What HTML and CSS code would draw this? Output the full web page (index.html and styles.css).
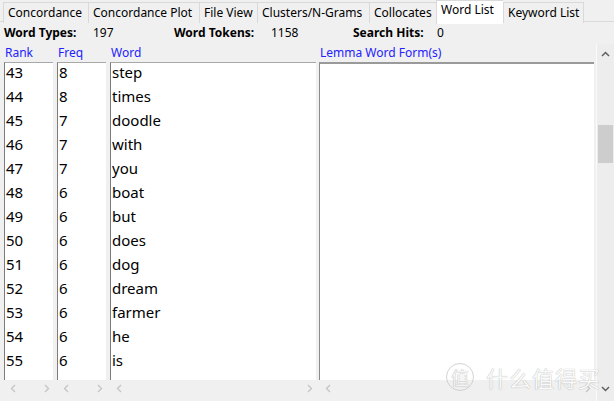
FILE: index.html
```html
<!DOCTYPE html>
<html>
<head>
<meta charset="utf-8">
<link rel="stylesheet" href="styles.css">
</head>
<body>
<div class="app">
  <nav class="tabs">
    <div class="tab t1">Concordance</div>
    <div class="tab t2">Concordance Plot</div>
    <div class="tab t3">File View</div>
    <div class="tab t4">Clusters/N-Grams</div>
    <div class="tab t5">Collocates</div>
    <div class="tab t6 active">Word List</div>
    <div class="tab t7">Keyword List</div>
  </nav>
  <div class="stats">
    <span class="lbl">Word Types:</span><span class="val">197</span>
    <span class="lbl">Word Tokens:</span><span class="val">1158</span>
    <span class="lbl">Search Hits:</span><span class="val">0</span>
  </div>
  <div class="main">
    <div class="lists">
      <div class="col c-rank">
        <div class="hdr">Rank</div>
        <div class="box">
          <div class="row">43</div><div class="row">44</div><div class="row">45</div><div class="row">46</div><div class="row">47</div><div class="row">48</div><div class="row">49</div><div class="row">50</div><div class="row">51</div><div class="row">52</div><div class="row">53</div><div class="row">54</div><div class="row">55</div>
        </div>
        <div class="hscroll">
          <svg class="arr" width="6" height="9" viewBox="0 0 6 9"><path d="M5 1 L1.5 4.5 L5 8" fill="none" stroke="#c4c4c4" stroke-width="1.3"/></svg>
          <svg class="arr" width="6" height="9" viewBox="0 0 6 9"><path d="M1 1 L4.5 4.5 L1 8" fill="none" stroke="#c4c4c4" stroke-width="1.3"/></svg>
        </div>
      </div>
      <div class="col c-freq">
        <div class="hdr">Freq</div>
        <div class="box">
          <div class="row">8</div><div class="row">8</div><div class="row">7</div><div class="row">7</div><div class="row">7</div><div class="row">6</div><div class="row">6</div><div class="row">6</div><div class="row">6</div><div class="row">6</div><div class="row">6</div><div class="row">6</div><div class="row">6</div>
        </div>
        <div class="hscroll">
          <svg class="arr" width="6" height="9" viewBox="0 0 6 9"><path d="M5 1 L1.5 4.5 L5 8" fill="none" stroke="#c4c4c4" stroke-width="1.3"/></svg>
          <svg class="arr" width="6" height="9" viewBox="0 0 6 9"><path d="M1 1 L4.5 4.5 L1 8" fill="none" stroke="#c4c4c4" stroke-width="1.3"/></svg>
        </div>
      </div>
      <div class="col c-word">
        <div class="hdr">Word</div>
        <div class="box">
          <div class="row">step</div><div class="row">times</div><div class="row">doodle</div><div class="row">with</div><div class="row">you</div><div class="row">boat</div><div class="row">but</div><div class="row">does</div><div class="row">dog</div><div class="row">dream</div><div class="row">farmer</div><div class="row">he</div><div class="row">is</div>
        </div>
        <div class="hscroll">
          <svg class="arr" width="6" height="9" viewBox="0 0 6 9"><path d="M5 1 L1.5 4.5 L5 8" fill="none" stroke="#c4c4c4" stroke-width="1.3"/></svg>
          <svg class="arr" width="6" height="9" viewBox="0 0 6 9"><path d="M1 1 L4.5 4.5 L1 8" fill="none" stroke="#c4c4c4" stroke-width="1.3"/></svg>
        </div>
      </div>
      <div class="col c-lemma">
        <div class="hdr">Lemma Word Form(s)</div>
        <div class="box lemma"></div>
        <div class="hscroll">
          <svg class="arr" width="6" height="9" viewBox="0 0 6 9"><path d="M5 1 L1.5 4.5 L5 8" fill="none" stroke="#c4c4c4" stroke-width="1.3"/></svg>
          <svg class="arr" width="6" height="9" viewBox="0 0 6 9"><path d="M1 1 L4.5 4.5 L1 8" fill="none" stroke="#c4c4c4" stroke-width="1.3"/></svg>
        </div>
      </div>
    </div>
    <div class="vscroll">
      <svg class="varr" width="9" height="6" viewBox="0 0 9 6"><path d="M1 5 L4.5 1.5 L8 5" fill="none" stroke="#606060" stroke-width="1.5"/></svg>
      <div class="track"><div class="thumb"></div></div>
      <svg class="varr" width="9" height="6" viewBox="0 0 9 6"><path d="M1 1 L4.5 4.5 L8 1" fill="none" stroke="#606060" stroke-width="1.5"/></svg>
    </div>
  </div>
  <div class="watermark"><span class="wm-circle">值</span><span class="wm-text">什么值得买</span></div>
</div>
</body>
</html>
```
FILE: styles.css
```css
html, body {
  margin: 0;
  padding: 0;
}
body {
  background: #f0f0f0;
  font-family: "Noto Sans", "Noto Sans CJK SC", sans-serif;
  color: #000;
  width: 614px;
  height: 401px;
  overflow: hidden;
}
.app {
  position: relative;
  width: 614px;
  height: 401px;
}
.tabs {
  display: flex;
  height: 22px;
  padding: 2px 0 0 3px;
  box-sizing: border-box;
  border-bottom: 1px solid #dadada;
  font-size: 12px;
}
.tab {
  flex: none;
  box-sizing: border-box;
  height: 21px;
  border: 1px solid #d9d9d9;
  border-right: none;
  border-bottom: none;
  background: #f0f0f0;
  line-height: 19px;
  padding-left: 4px;
  white-space: nowrap;
  overflow: hidden;
}
.t1 { width: 85px; }
.t2 { width: 111px; }
.t3 { width: 58px; }
.t4 { width: 112px; }
.t5 { width: 67px; }
.t6 { width: 67px; }
.t7 { width: 81px; border-right: 1px solid #d9d9d9; }
.tab.active {
  background: #fff;
  height: 24px;
  margin-top: -2px;
  line-height: 17px;
  border-color: #d9d9d9;
  position: relative;
  z-index: 1;
}
.stats {
  display: grid;
  grid-template-columns: 89px 81px 97px 82px 84px auto;
  padding-left: 4px;
  height: 22px;
  line-height: 22px;
  font-size: 12px;
}
.lbl { font-weight: bold; }
.main {
  display: flex;
  height: 357px;
}
.lists {
  display: flex;
  padding-left: 4px;
}
.col {
  display: flex;
  flex-direction: column;
}
.c-rank { width: 50px; margin-right: 3px; }
.c-freq { width: 50px; margin-right: 3px; }
.c-word { width: 207px; margin-right: 2px; }
.c-lemma { width: 276px; margin-right: 1px; }
.hdr {
  height: 18px;
  line-height: 18px;
  font-size: 12px;
  color: #2222ff;
  white-space: nowrap;
  padding-left: 1px;
}
.box {
  height: 318px;
  background: #fff;
  border-left: 1px solid #7c7c7c;
  border-top: 1px solid #a8a8a8;
  box-sizing: border-box;
  overflow: hidden;
  margin-right: 1px;
}
.box.lemma {
  border-top: 2px solid #9a9a9a;
  border-left: 1px solid #8a8a8a;
}
.row {
  height: 24px;
  line-height: 18px;
  font-size: 15px;
  padding-left: 1px;
  white-space: nowrap;
}
.hscroll {
  height: 16px;
  display: flex;
  justify-content: space-between;
  align-items: center;
  padding: 0 4px 0 6px;
}
.arr { display: block; }
.vscroll {
  width: 18px;
  height: 357px;
  border-left: 1px solid #fafafa;
  box-sizing: border-box;
  background: #ededed;
  display: flex;
  flex-direction: column;
  align-items: center;
  padding-top: 7px;
}
.track {
  flex: 1;
  width: 100%;
  padding-top: 59px;
  box-sizing: border-box;
}
.thumb {
  width: 15px;
  height: 38px;
  margin-left: 1px;
  background: #cdcdcd;
}
.varr {
  display: block;
  margin-bottom: 9px;
}
.watermark {
  position: absolute;
  left: 446px;
  top: 361px;
  display: flex;
  align-items: center;
  font-family: "Noto Sans CJK SC", sans-serif;
  color: #fafafa;
  text-shadow: 0 0 1px rgba(0,0,0,0.4);
  pointer-events: none;
}
.wm-circle {
  width: 26px;
  height: 26px;
  border: 1.5px solid rgba(200,200,200,0.8);
  border-radius: 50%;
  font-size: 18px;
  line-height: 26px;
  text-align: center;
  margin-right: 12px;
  color: #f5f5f5;
}
.wm-text {
  font-size: 22px;
  letter-spacing: 1px;
}
```
